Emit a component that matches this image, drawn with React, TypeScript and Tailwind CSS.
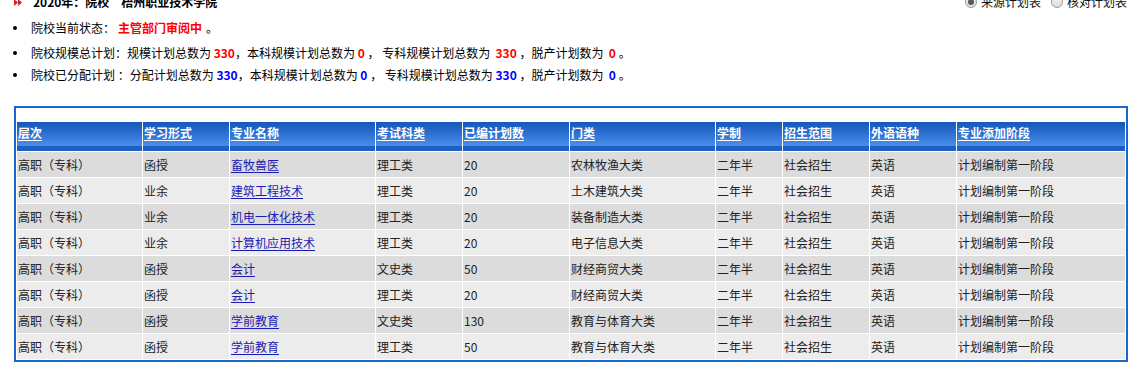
import React from "react";

const rows = [
  ["高职（专科）", "函授", "畜牧兽医", "理工类", "20", "农林牧渔大类", "二年半", "社会招生", "英语", "计划编制第一阶段"],
  ["高职（专科）", "业余", "建筑工程技术", "理工类", "20", "土木建筑大类", "二年半", "社会招生", "英语", "计划编制第一阶段"],
  ["高职（专科）", "业余", "机电一体化技术", "理工类", "20", "装备制造大类", "二年半", "社会招生", "英语", "计划编制第一阶段"],
  ["高职（专科）", "业余", "计算机应用技术", "理工类", "20", "电子信息大类", "二年半", "社会招生", "英语", "计划编制第一阶段"],
  ["高职（专科）", "函授", "会计", "文史类", "50", "财经商贸大类", "二年半", "社会招生", "英语", "计划编制第一阶段"],
  ["高职（专科）", "函授", "会计", "理工类", "20", "财经商贸大类", "二年半", "社会招生", "英语", "计划编制第一阶段"],
  ["高职（专科）", "函授", "学前教育", "文史类", "130", "教育与体育大类", "二年半", "社会招生", "英语", "计划编制第一阶段"],
  ["高职（专科）", "函授", "学前教育", "理工类", "50", "教育与体育大类", "二年半", "社会招生", "英语", "计划编制第一阶段"],
];

const headers = ["层次", "学习形式", "专业名称", "考试科类", "已编计划数", "门类", "学制", "招生范围", "外语语种", "专业添加阶段"];

function Dot() {
  return <span className="w-[4px] h-[4px] rounded-full bg-black ml-[13px] mr-[14px] shrink-0" />;
}

function Radio({ checked }: { checked?: boolean }) {
  return (
    <span className="w-[12px] h-[12px] rounded-full border border-[#9a9a9a] bg-[linear-gradient(to_bottom,#f2f2f2,#dcdcdc)] flex items-center justify-center shrink-0">
      {checked && <span className="w-[6px] h-[6px] rounded-full bg-[#5a5a5a]" />}
    </span>
  );
}

export default function App() {
  return (
    <div className="w-[1140px] h-[372px] overflow-hidden bg-white text-[12px] text-black font-['Noto_Sans_CJK_SC','Noto_Sans',sans-serif]">
      <div className="flex items-center justify-between -mt-[6px] h-[16px] leading-[16px]">
        <div className="flex items-center">
          <svg width="8" height="7" viewBox="0 0 8 7" className="ml-[14px] mr-[11px]">
            <polygon points="0,0 4,3.5 0,7" fill="#e21b1b" />
            <polygon points="4,0 8,3.5 4,7" fill="#e21b1b" />
          </svg>
          <span className="font-bold">2020年：院校“梧州职业技术学院”</span>
        </div>
        <div className="flex items-center mr-[13px] text-[#111]">
          <Radio checked />
          <span className="ml-[4px] mr-[10px]">来源计划表</span>
          <Radio />
          <span className="ml-[4px]">核对计划表</span>
        </div>
      </div>

      <div className="mt-[10px] flex items-center h-[16px] leading-[16px]">
        <Dot />
        <span>院校当前状态：</span>
        <span className="ml-[3px] text-[#ff0000] font-bold">主管部门审阅中</span>
        <span className="ml-[4px]">。</span>
      </div>

      <div className="mt-[9px] flex items-center h-[16px] leading-[16px] whitespace-pre">
        <Dot />
        <span>院校规模总计划：规模计划总数为 </span>
        <span className="text-[#ff0000] font-bold">330</span>
        <span>，本科规模计划总数为 </span>
        <span className="text-[#ff0000] font-bold">0</span>
        <span> ， 专科规模计划总数为  </span>
        <span className="text-[#ff0000] font-bold">330</span>
        <span> ，脱产计划数为  </span>
        <span className="text-[#ff0000] font-bold">0</span>
        <span> 。</span>
      </div>

      <div className="mt-[6px] flex items-center h-[16px] leading-[16px] whitespace-pre">
        <Dot />
        <span>院校已分配计划 ：分配计划总数为 </span>
        <span className="text-[#0000ff] font-bold">330</span>
        <span>，本科规模计划总数为 </span>
        <span className="text-[#0000ff] font-bold">0</span>
        <span> ， 专科规模计划总数为 </span>
        <span className="text-[#0000ff] font-bold">330</span>
        <span> ，脱产计划数为  </span>
        <span className="text-[#0000ff] font-bold">0</span>
        <span> 。</span>
      </div>

      <table className="mt-[23px] ml-[14px] w-[1114px] table-fixed border-separate border-spacing-[1px] border-2 border-[#1a66d0] bg-white">
        <colgroup>
          <col className="w-[125px]" />
          <col className="w-[86px]" />
          <col className="w-[145px]" />
          <col className="w-[86px]" />
          <col className="w-[106px]" />
          <col className="w-[145px]" />
          <col className="w-[66px]" />
          <col className="w-[86px]" />
          <col className="w-[86px]" />
          <col className="w-[168px]" />
        </colgroup>
        <tbody>
          <tr className="h-[12px]">
            <td colSpan={10} className="p-0 h-[12px] leading-none"></td>
          </tr>
          <tr className="h-[29px]">
            {headers.map((h) => (
              <td
                key={h}
                className="p-0 pl-[1px] pt-[3px] h-[29px] align-top leading-[16px] font-bold text-white bg-[linear-gradient(to_bottom,#1657b9_0%,#2d70d2_40%,#4a8fe9_82%,#1c5fc3_84%,#1c5fc3_100%)]"
              >
                <span className="underline underline-offset-2">{h}</span>
              </td>
            ))}
          </tr>
          {rows.map((r, i) => (
            <tr key={i} className={i % 2 === 0 ? "bg-[#dcdcdc]" : "bg-[#ececec]"}>
              {r.map((c, j) => (
                <td key={j} className="p-0 pl-[1px] h-[25px] leading-[25px] text-[#222] whitespace-nowrap overflow-hidden">
                  {j === 2 ? <span className="text-[#1a1ab4] underline underline-offset-2">{c}</span> : c}
                </td>
              ))}
            </tr>
          ))}
        </tbody>
      </table>
    </div>
  );
}
